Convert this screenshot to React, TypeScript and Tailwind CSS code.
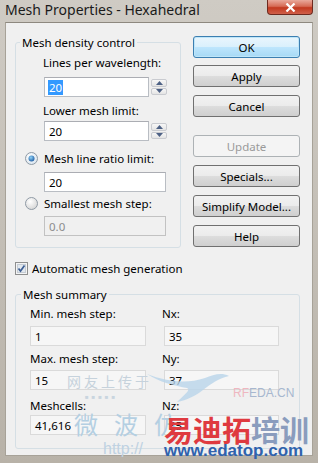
import React from 'react';

const sans = "font-['Noto_Sans',sans-serif]";
const cjk = "font-['Noto_Sans_CJK_SC',sans-serif]";

type BtnProps = { label: string; kind?: 'primary' | 'disabled' | 'normal'; className?: string };

const DlgButton: React.FC<BtnProps> = ({ label, kind = 'normal', className = '' }) => {
    let look = 'border-[#707070] bg-[linear-gradient(to_bottom,#f2f2f2_0%,#ebebeb_50%,#dddddd_50%,#cfcfcf_100%)] text-black';
    if (kind === 'primary') look = 'border-[#3c7fb1] bg-[linear-gradient(to_bottom,#eaf6fd_0%,#d9f0fc_50%,#bee6fd_50%,#a7d9f5_100%)] text-black shadow-[inset_0_0_0_1px_#bfe6f9]';
    if (kind === 'disabled') look = 'border-[#adb2b5] bg-[#f4f4f4] text-[#9a9a9a]';
    return (
        <div className={`h-[22px] w-full rounded-[3px] border flex items-center justify-center leading-[15px] ${look} ${className}`}>
            {label}
        </div>
    );
};

type FieldProps = { value: string; variant?: 'edit' | 'disabled' | 'readonly'; selected?: boolean; className?: string };

const Field: React.FC<FieldProps> = ({ value, variant = 'edit', selected, className = '' }) => {
    let look = 'bg-white border-[#b9bdc3] border-t-[#abadb3]';
    if (variant === 'disabled') look = 'bg-[#f0f0f0] border-[#c2c2c2] text-[#8d8d8d]';
    if (variant === 'readonly') look = 'bg-[#f6f6f6] border-[#dadada]';
    return (
        <div className={`h-[20px] border flex items-center pl-[3px] leading-[15px] ${look} ${className}`}>
            {selected ? <span className="bg-[#3399ff] text-white px-[1px]">{value}</span> : <span className="pl-[1px]">{value}</span>}
        </div>
    );
};

const Spin: React.FC = () => (
    <div className="ml-[2px] mt-[2px] w-[16px] h-[16px] flex flex-col gap-[1px]">
        {[0, 1].map((i) => (
            <div key={i} className="flex-1 border border-[#c9cbd0] rounded-[2px] bg-gradient-to-b from-[#f7f7f7] to-[#e4e4e4] flex items-center justify-center">
                <svg width="7" height="4" viewBox="0 0 7 4">
                    {i === 0 ? <path d="M0 4 L3.5 0 L7 4 Z" fill="#4d6185" /> : <path d="M0 0 L3.5 4 L7 0 Z" fill="#4d6185" />}
                </svg>
            </div>
        ))}
    </div>
);

const Radio: React.FC<{ checked?: boolean }> = ({ checked }) => (
    <svg width="13" height="13" viewBox="0 0 13 13" className="shrink-0">
        <defs>
            <radialGradient id={checked ? 'rg1' : 'rg0'} cx="40%" cy="35%" r="70%">
                <stop offset="0%" stopColor="#ffffff" />
                <stop offset="100%" stopColor={checked ? '#d8e4ee' : '#d4d4d4'} />
            </radialGradient>
            <radialGradient id="dot" cx="40%" cy="35%" r="70%">
                <stop offset="0%" stopColor="#8fd2f7" />
                <stop offset="100%" stopColor="#1d5aa1" />
            </radialGradient>
        </defs>
        <circle cx="6.5" cy="6.5" r="6" fill={`url(#${checked ? 'rg1' : 'rg0'})`} stroke="#8f9aa5" />
        {checked && <circle cx="6.5" cy="6.5" r="3" fill="url(#dot)" />}
    </svg>
);

const CheckBox: React.FC = () => (
    <svg width="13" height="13" viewBox="0 0 13 13" className="shrink-0">
        <rect x="0.5" y="0.5" width="12" height="12" fill="#f4f4f4" stroke="#8e8f8f" />
        <rect x="2.5" y="2.5" width="8" height="8" fill="#e2e8ee" stroke="#c5ccd4" />
        <path d="M3.5 6.5 L5.5 9 L9.5 3.5" fill="none" stroke="#3d5f95" strokeWidth="1.7" />
    </svg>
);

export default function App() {
    return (
        <div className={`relative w-[318px] h-[463px] overflow-hidden flex flex-col bg-gradient-to-b from-[#cfcbc4] to-[#b8b2a8] text-[11.5px] text-black ${sans}`}>
            {/* title bar */}
            <div className="h-[22px] shrink-0 flex items-start justify-between">
                <span className="pl-[5px] pt-[1px] text-[14px] leading-[18px] text-[#1a1a1a]">Mesh Properties - Hexahedral</span>
                <div className="mr-[5px] w-[46px] h-[15px] rounded-b-[4px] border border-t-0 border-[#6e2a1f] bg-[linear-gradient(to_bottom,#e9a99b_0%,#d66b55_45%,#c2391f_55%,#d0604a_100%)] flex items-center justify-center">
                    <svg width="11" height="9" viewBox="0 0 11 9">
                        <path d="M1.5 0.5 L9.5 8.5 M9.5 0.5 L1.5 8.5" stroke="#ffffff" strokeWidth="2.2" />
                    </svg>
                </div>
            </div>

            {/* client area */}
            <div className="flex-1 mx-[5px] mb-[7px] bg-[#f0f0f0] border border-[#a7a298] border-t-[#8d887f]">
                <div className="flex items-start">
                    <fieldset className="ml-[9px] mt-[12px] w-[166px] border border-[#d5dfe5] rounded-[3px] pb-[11px]">
                        <legend className="ml-[4px] px-[2px] leading-[15px]">Mesh density control</legend>
                        <div className="mt-[5px] ml-[27px] leading-[15px]">Lines per wavelength:</div>
                        <div className="mt-[7px] ml-[28px] flex">
                            <Field value="20" selected className="w-[105px]" />
                            <Spin />
                        </div>
                        <div className="mt-[6px] ml-[27px] leading-[15px]">Lower mesh limit:</div>
                        <div className="mt-[3px] ml-[28px] flex">
                            <Field value="20" className="w-[105px]" />
                            <Spin />
                        </div>
                        <div className="mt-[10px] ml-[9px] flex items-center gap-[6px] leading-[15px]">
                            <Radio checked />
                            <span>Mesh line ratio limit:</span>
                        </div>
                        <Field value="20" className="mt-[6px] ml-[28px] w-[122px]" />
                        <div className="mt-[4px] ml-[9px] flex items-center gap-[6px] leading-[15px]">
                            <Radio />
                            <span>Smallest mesh step:</span>
                        </div>
                        <Field value="0.0" variant="disabled" className="mt-[5px] ml-[28px] w-[122px]" />
                    </fieldset>

                    <div className="ml-[12px] mt-[13px] w-[107px] flex flex-col">
                        <DlgButton label="OK" kind="primary" />
                        <DlgButton label="Apply" className="mt-[7px]" />
                        <DlgButton label="Cancel" className="mt-[8px]" />
                        <DlgButton label="Update" kind="disabled" className="mt-[18px]" />
                        <DlgButton label="Specials..." className="mt-[8px]" />
                        <DlgButton label="Simplify Model..." className="mt-[8px]" />
                        <DlgButton label="Help" className="mt-[8px]" />
                    </div>
                </div>

                <div className="mt-[13px] ml-[9px] flex items-center gap-[4px] leading-[15px]">
                    <CheckBox />
                    <span>Automatic mesh generation</span>
                </div>

                <fieldset className="mt-[11px] ml-[9px] w-[285px] border border-[#d5dfe5] rounded-[3px] pb-[13px]">
                    <legend className="ml-[5px] px-[2px] leading-[15px]">Mesh summary</legend>
                    <div className="grid grid-cols-[116px_115px] gap-x-[18px] pl-[14px]">
                        <div className="mt-[4px] leading-[15px]">Min. mesh step:</div>
                        <div className="mt-[4px] -ml-[2px] leading-[15px]">Nx:</div>
                        <Field value="1" variant="readonly" className="mt-[5px]" />
                        <Field value="35" variant="readonly" className="mt-[5px]" />
                        <div className="mt-[5px] leading-[15px]">Max. mesh step:</div>
                        <div className="mt-[5px] -ml-[2px] leading-[15px]">Ny:</div>
                        <Field value="15" variant="readonly" className="mt-[4px]" />
                        <Field value="37" variant="readonly" className="mt-[4px]" />
                        <div className="mt-[8px] leading-[15px]">Meshcells:</div>
                        <div className="mt-[8px] -ml-[2px] leading-[15px]">Nz:</div>
                        <Field value="41,616" variant="readonly" className="mt-[2px]" />
                        <Field value="35" variant="readonly" className="mt-[2px]" />
                    </div>
                </fieldset>
            </div>

            {/* watermark overlay */}
            <div className="absolute inset-0 pointer-events-none">
                <div className={`absolute left-[67px] top-[373px] text-[14px] leading-[16px] tracking-[3px] text-[#c6d2dc] ${cjk}`}>网友上传于</div>
                <div className="absolute left-[85px] top-[394px] text-[6px] leading-[6px] tracking-[3px] text-[#c9d5df]">■■■■■</div>
                <svg className="absolute left-[147px] top-[368px]" width="82" height="34" viewBox="0 0 82 34">
                    <path d="M0 6 C20 14 40 16 58 10 C66 7 74 4 82 8 C72 10 64 16 56 22 C48 28 40 32 30 34 C38 26 44 22 40 20 C28 18 12 14 0 6 Z" fill="#b9d5ea" opacity="0.8" />
                </svg>
                <div className="absolute left-[233px] top-[386px] text-[12px] leading-[14px] font-['Liberation_Sans',sans-serif]">
                    <span className="text-[#efb7c0]">RF</span><span className="text-[#a7b7cf]">EDA.CN</span>
                </div>
                <div className={`absolute left-[74px] top-[410px] text-[24px] leading-[28px] tracking-[16px] text-[#b4cfe2] ${cjk}`}>微波仿</div>
                <div className="absolute left-[103px] top-[440px] text-[16px] leading-[18px] text-[#bfd2e2] font-['Liberation_Sans',sans-serif]">http://</div>
                <div className={`absolute left-[164px] top-[413px] text-[29px] leading-[32px] font-bold ${cjk}`}>
                    <span className="text-[#df3a3f]">易迪拓</span><span className="text-[#8a9cbd]">培训</span>
                </div>
                <div className="absolute left-[164px] top-[442px] text-[17px] leading-[18px] font-bold text-[#2f62ad] font-['Liberation_Sans',sans-serif]">www.edatop.com</div>
            </div>
        </div>
    );
}
